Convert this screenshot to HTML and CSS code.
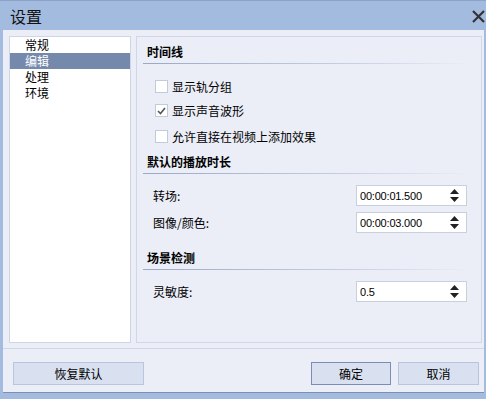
FILE: index.html
```html
<!DOCTYPE html>
<html lang="zh-CN">
<head>
    <meta charset="UTF-8">
    <title>设置</title>
    <link rel="stylesheet" href="styles.css">
</head>
<body>

<!-- Title bar -->
<div class="titlebar">
    <span class="title">设置</span>
    <svg class="close-btn" width="13" height="13" viewBox="0 0 13 13">
        <path d="M1 1 L12 12 M12 1 L1 12" stroke="#333" stroke-width="2.2" fill="none"/>
    </svg>
</div>

<div class="dialog">
    <div class="main">
        <ul class="tabs">
            <li>常规</li>
            <li class="active">编辑</li>
            <li>处理</li>
            <li>环境</li>
        </ul>

        <div class="panel">
            <div class="section-title">时间线</div>
            <div class="checks">
                <label class="check"><span class="box"></span>显示轨分组</label>
                <label class="check"><span class="box checked">
                    <svg width="9" height="8" viewBox="0 0 9 8"><path d="M1 4 L3.5 6.5 L8 1" stroke="#555" stroke-width="1.6" fill="none"/></svg>
                </span>显示声音波形</label>
                <label class="check"><span class="box"></span>允许直接在视频上添加效果</label>
            </div>

            <div class="section-title">默认的播放时长</div>
            <div class="fields">
                <div class="field">
                    <span>转场:</span>
                    <div class="spin">
                        <span class="value">00:00:01.500</span>
                        <svg class="arrows" width="9" height="13" viewBox="0 0 9 13"><path d="M4.5 0 L9 5 L0 5 Z M0 8 L9 8 L4.5 13 Z" fill="#222"/></svg>
                    </div>
                </div>
                <div class="field">
                    <span>图像/颜色:</span>
                    <div class="spin">
                        <span class="value">00:00:03.000</span>
                        <svg class="arrows" width="9" height="13" viewBox="0 0 9 13"><path d="M4.5 0 L9 5 L0 5 Z M0 8 L9 8 L4.5 13 Z" fill="#222"/></svg>
                    </div>
                </div>
            </div>

            <div class="section-title">场景检测</div>
            <div class="fields">
                <div class="field">
                    <span>灵敏度:</span>
                    <div class="spin">
                        <span class="value">0.5</span>
                        <svg class="arrows" width="9" height="13" viewBox="0 0 9 13"><path d="M4.5 0 L9 5 L0 5 Z M0 8 L9 8 L4.5 13 Z" fill="#222"/></svg>
                    </div>
                </div>
            </div>
        </div>
    </div>

    <div class="footer">
        <button class="btn btn-reset">恢复默认</button>
        <div class="footer-right">
            <button class="btn btn-default">确定</button>
            <button class="btn">取消</button>
        </div>
    </div>
</div>

</body>
</html>
```

FILE: styles.css
```css
body {
    margin: 0;
    width: 486px;
    height: 399px;
    overflow: hidden;
    background-color: #a3bbdf;
    font-family: "Noto Sans CJK SC", sans-serif;
    font-size: 12px;
    color: #000;
}

/* Title bar */
.titlebar {
    height: 29px;
    border-top: 1px solid #8ca3ca;
    display: flex;
    align-items: center;
    justify-content: space-between;
    padding: 0 1px 0 10px;
}

.title {
    font-size: 16px;
    line-height: 18px;
    color: #111;
}

.close-btn {
    margin-top: 1px;
}

/* Dialog body */
.dialog {
    margin: 0 2px 0 3px;
    height: 362px;
    background-color: #ebeef7;
    border-bottom: 1px solid #7d8fb2;
}

.main {
    display: flex;
    gap: 5px;
    height: 307px;
    padding: 6px 2px 5px 6px;
    border-bottom: 1px solid #cfd6e6;
}

.tabs {
    list-style: none;
    margin: 0;
    padding: 0;
    width: 120px;
    background-color: #fff;
    border: 1px solid #cdd5e6;
}

.tabs li {
    height: 16px;
    line-height: 16px;
    padding-left: 15px;
}

.tabs li.active {
    background-color: #7589ad;
    color: #fff;
}

.panel {
    flex: 1;
    border: 1px solid #cfd7e8;
    padding: 0 14px 0 6px;
}

.section-title {
    font-weight: bold;
    line-height: 14px;
    padding: 8px 0 4px 4px;
    margin-right: -4px;
    border-bottom: 1px solid transparent;
    border-image: linear-gradient(to right, #9aa8c9, #c4cde2 60%, rgba(235, 238, 247, 0)) 1;
}

.checks {
    padding: 16px 0 2px 12px;
}

.check {
    display: flex;
    align-items: center;
    gap: 4px;
    height: 13px;
    margin-bottom: 11px;
}

.check:nth-child(2) {
    margin-bottom: 13px;
}

.check:last-child {
    margin-bottom: 2px;
}

.box {
    width: 11px;
    height: 11px;
    border: 1px solid #c3cbdb;
    background-color: #fff;
    display: flex;
    align-items: center;
    justify-content: center;
}

.fields {
    padding: 11px 0 4px 10px;
}

.field {
    display: flex;
    align-items: center;
    justify-content: space-between;
    height: 21px;
    margin-bottom: 6px;
}

.spin {
    width: 111px;
    height: 21px;
    border: 1px solid #c8d0e0;
    background-color: #fff;
    display: flex;
    align-items: center;
    justify-content: space-between;
    padding: 0 7px 0 3px;
    box-sizing: border-box;
}

.value {
    font-family: "Liberation Sans", sans-serif;
    font-size: 11px;
    letter-spacing: -0.2px;
}

/* Footer buttons */
.footer {
    display: flex;
    justify-content: space-between;
    padding: 13px 5px 0 10px;
}

.footer-right {
    display: flex;
    gap: 7px;
}

.btn {
    height: 23px;
    width: 81px;
    font-family: "Noto Sans CJK SC", sans-serif;
    font-size: 12px;
    background-color: #d9e0f0;
    border: 1px solid #b8c5df;
    padding: 0;
    color: #000;
}

.btn-reset {
    width: 131px;
}

.btn-default {
    width: 80px;
    border-color: #7a8db5;
}
```
